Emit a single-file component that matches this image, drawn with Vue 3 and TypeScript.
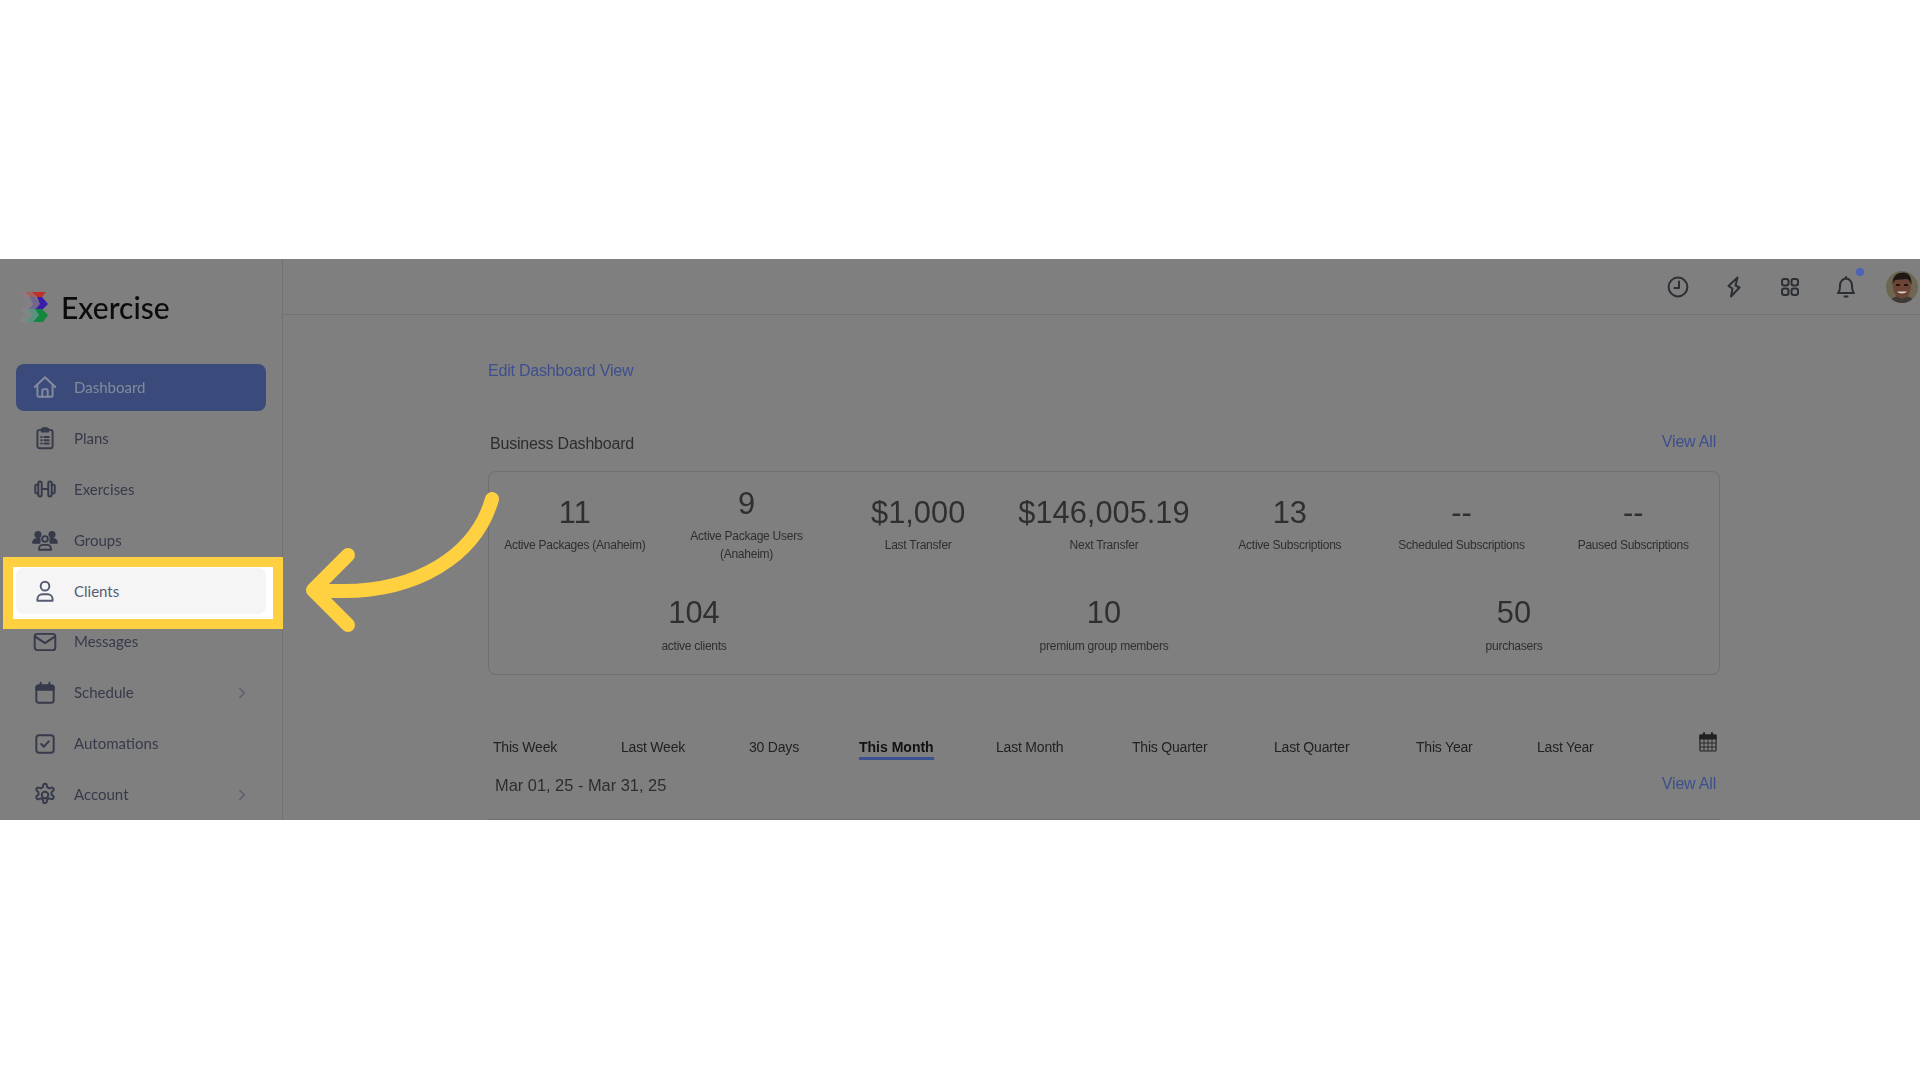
<script setup lang="ts">
interface NavItem { label: string; icon: string; chevron?: boolean; active?: boolean; current?: boolean }
const nav: NavItem[] = [
  { label: 'Dashboard', icon: 'home', active: true },
  { label: 'Plans', icon: 'plans' },
  { label: 'Exercises', icon: 'dumbbell' },
  { label: 'Groups', icon: 'groups' },
  { label: 'Clients', icon: 'user', current: true },
  { label: 'Messages', icon: 'mail' },
  { label: 'Schedule', icon: 'calendar', chevron: true },
  { label: 'Automations', icon: 'check' },
  { label: 'Account', icon: 'gear', chevron: true },
]
const statsTop = [
  { v: '11', l: 'Active Packages (Anaheim)' },
  { v: '9', l: 'Active Package Users (Anaheim)', tall: true },
  { v: '$1,000', l: 'Last Transfer' },
  { v: '$146,005.19', l: 'Next Transfer' },
  { v: '13', l: 'Active Subscriptions' },
  { v: '--', l: 'Scheduled Subscriptions' },
  { v: '--', l: 'Paused Subscriptions' },
]
const statsBottom = [
  { v: '104', l: 'active clients' },
  { v: '10', l: 'premium group members' },
  { v: '50', l: 'purchasers' },
]
const tabs = ['This Week', 'Last Week', '30 Days', 'This Month', 'Last Month', 'This Quarter', 'Last Quarter', 'This Year', 'Last Year']
</script>

<template>
  <div class="page">
    <div class="stage">
      <aside class="sidebar">
        <div class="brand">
          <svg class="logo" viewBox="0 0 30 30" width="30" height="30">
            <g transform="translate(-14 0)" opacity=".75">
              <path d="M14 0 H28 L24 5 H19 Z" fill="#8d7d80" />
              <path d="M19 5 H24 L30 12 L24 18 H17 L22 12 Z" fill="#84808e" />
              <path d="M17 17 H24 L30 23 L25 30 H15 L21 23 Z" fill="#7f8a88" />
            </g>
            <g transform="translate(-7 0)">
              <path d="M14 0 H28 L24 5 H19 Z" fill="#a4625f" />
              <path d="M19 5 H24 L30 12 L24 18 H17 L22 12 Z" fill="#72668f" />
              <path d="M17 17 H24 L30 23 L25 30 H15 L21 23 Z" fill="#5d917f" />
            </g>
            <path d="M14 0 H28 L24 5 H19 Z" fill="#c2302a" />
            <path d="M19 5 H24 L30 12 L24 18 H17 L22 12 Z" fill="#3a1ca6" />
            <path d="M17 17 H24 L30 23 L25 30 H15 L21 23 Z" fill="#11883d" />
          </svg>
          <span class="brand-name">Exercise</span>
        </div>
        <nav class="nav">
          <div v-for="item in nav" :key="item.label" class="nav-item" :class="{ active: item.active, current: item.current }">
            <svg class="nav-icon" viewBox="0 0 24 24" width="26" height="26" fill="none" stroke="currentColor" stroke-width="1.8" stroke-linecap="round" stroke-linejoin="round">
              <template v-if="item.icon === 'home'">
                <path d="M2.5 12 L12 3 L21.5 12" />
                <path d="M5 10 V20 a1 1 0 0 0 1 1 H18 a1 1 0 0 0 1 -1 V10" />
                <path d="M9.5 21 V15 a1 1 0 0 1 1 -1 h3 a1 1 0 0 1 1 1 V21" />
              </template>
              <template v-else-if="item.icon === 'plans'">
                <rect x="5" y="4.5" width="14" height="17" rx="2" />
                <path d="M9 4.5 a1.5 1.5 0 0 1 1.5 -1.5 h3 a1.5 1.5 0 0 1 1.5 1.5 v1.5 h-6 Z" />
                <path d="M8.5 11 h.5 M11.5 11 h4 M8.5 14 h.5 M11.5 14 h4 M8.5 17 h.5 M11.5 17 h4" />
              </template>
              <template v-else-if="item.icon === 'dumbbell'">
                <path d="M9 12 H15" />
                <rect x="5.8" y="5" width="3.2" height="14" rx="1.6" />
                <rect x="15" y="5" width="3.2" height="14" rx="1.6" />
                <path d="M5.8 8 H4.2 a1.2 1.2 0 0 0 -1.2 1.2 V14.8 a1.2 1.2 0 0 0 1.2 1.2 H5.8" />
                <path d="M18.2 8 H19.8 a1.2 1.2 0 0 1 1.2 1.2 V14.8 a1.2 1.2 0 0 1 -1.2 1.2 H18.2" />
              </template>
              <template v-else-if="item.icon === 'groups'">
                <circle cx="12" cy="11" r="2.6" />
                <path d="M6.5 21 v-1 a3.5 3.5 0 0 1 3.5 -3.5 h4 a3.5 3.5 0 0 1 3.5 3.5 v1 Z" />
                <circle cx="5.5" cy="7" r="2.4" fill="currentColor" />
                <circle cx="18.5" cy="7" r="2.4" fill="currentColor" />
                <path d="M1 14.5 a4 4 0 0 1 4 -3.5 h2 v3.5 Z M23 14.5 a4 4 0 0 0 -4 -3.5 h-2 v3.5 Z" fill="currentColor" />
              </template>
              <template v-else-if="item.icon === 'user'">
                <circle cx="12" cy="7.5" r="4" />
                <path d="M5 21 v-1.5 a4.5 4.5 0 0 1 4.5 -4.5 h5 a4.5 4.5 0 0 1 4.5 4.5 V21 Z" />
              </template>
              <template v-else-if="item.icon === 'mail'">
                <rect x="2.5" y="4.5" width="19" height="15" rx="2.5" />
                <path d="M3 7 L12 13 L21 7" />
              </template>
              <template v-else-if="item.icon === 'calendar'">
                <rect x="4" y="5" width="16" height="16" rx="2" />
                <path d="M4 9 H20 V7 a2 2 0 0 0 -2 -2 H6 a2 2 0 0 0 -2 2 Z" fill="currentColor" />
                <path d="M8 2.5 V5 M16 2.5 V5" />
              </template>
              <template v-else-if="item.icon === 'check'">
                <rect x="4" y="4" width="16" height="16" rx="2.5" />
                <path d="M8.5 12 L11 14.5 L15.5 9.5" />
              </template>
              <template v-else>
                <circle cx="12" cy="12" r="3" />
                <path d="M10.3 3.3 a1.7 1.7 0 0 1 3.4 0 l.3 1.5 a7.5 7.5 0 0 1 1.9 1.1 l1.5 -.5 a1.7 1.7 0 0 1 1.7 3 l-1.1 1 a7.5 7.5 0 0 1 0 2.2 l1.1 1 a1.7 1.7 0 0 1 -1.7 3 l-1.5 -.5 a7.5 7.5 0 0 1 -1.9 1.1 l-.3 1.5 a1.7 1.7 0 0 1 -3.4 0 l-.3 -1.5 a7.5 7.5 0 0 1 -1.9 -1.1 l-1.5 .5 a1.7 1.7 0 0 1 -1.7 -3 l1.1 -1 a7.5 7.5 0 0 1 0 -2.2 l-1.1 -1 a1.7 1.7 0 0 1 1.7 -3 l1.5 .5 a7.5 7.5 0 0 1 1.9 -1.1 Z" />
              </template>
            </svg>
            <span class="nav-label">{{ item.label }}</span>
            <svg v-if="item.chevron" class="chevron" viewBox="0 0 10 16" width="8" height="12" fill="none" stroke="currentColor" stroke-width="1.8" stroke-linecap="round" stroke-linejoin="round">
              <path d="M2 2 L8 8 L2 14" />
            </svg>
          </div>
        </nav>
      </aside>

      <main class="main">
        <header class="topbar">
          <svg class="top-icon" viewBox="0 0 24 24" width="24" height="24" fill="none" stroke="currentColor" stroke-width="2" stroke-linecap="round" stroke-linejoin="round">
            <circle cx="12" cy="12" r="9.4" />
            <path d="M13 6.5 V13 H8.5" />
          </svg>
          <svg class="top-icon" viewBox="0 0 24 24" width="24" height="24" fill="none" stroke="currentColor" stroke-width="2" stroke-linecap="round" stroke-linejoin="round">
            <path d="M15.5 2.5 L6.5 11 L10.5 13.5 L9 21.5 L17.5 12.5 L13.5 10.5 Z" />
          </svg>
          <svg class="top-icon" viewBox="0 0 24 24" width="24" height="24" fill="none" stroke="currentColor" stroke-width="2" stroke-linejoin="round">
            <rect x="4" y="4" width="6.5" height="6.5" rx="2.2" />
            <rect x="13.5" y="4" width="6.5" height="6.5" rx="2.2" />
            <rect x="4" y="13.5" width="6.5" height="6.5" rx="2.2" />
            <rect x="13.5" y="13.5" width="6.5" height="6.5" rx="2.2" />
          </svg>
          <div class="bell">
            <svg class="top-icon" viewBox="0 0 24 24" width="24" height="24" fill="none" stroke="currentColor" stroke-width="2" stroke-linecap="round" stroke-linejoin="round">
              <path d="M4 18 H20 C18.5 16.5 18 15 18 10.5 A6 7 0 0 0 6 10.5 C6 15 5.5 16.5 4 18 Z" />
              <path d="M12 2 V3.5" />
              <path d="M10.5 21.5 H13.5" />
            </svg>
            <span class="dot"></span>
          </div>
          <svg class="avatar" viewBox="0 0 32 32" width="32" height="32">
            <defs><clipPath id="avatar-clip"><circle cx="16" cy="16" r="16" /></clipPath></defs>
            <g clip-path="url(#avatar-clip)">
              <rect width="32" height="32" fill="#6d6650" />
              <path d="M4 32 C5 26 10 25 16 25 C22 25 27 26 28 32 Z" fill="#3d3a38" />
              <ellipse cx="16" cy="15.5" rx="9" ry="12" fill="#6b4436" />
              <path d="M6.5 14 C6 4 12 1.5 17 1.5 C23 1.5 26 6 25.5 14 C24 10 23 8.5 20 8 C15 9 10 8 8 10 Z" fill="#1d1715" />
              <path d="M10 14 h4 M18 14 h4" stroke="#1d1715" stroke-width="2" />
              <path d="M11 20.5 C13 23 19 23 21 20.5 Z" fill="#d9d2c9" />
            </g>
          </svg>
        </header>

        <div class="content">
          <a class="edit-link">Edit Dashboard View</a>
          <div class="section-head">
            <h2 class="section-title">Business Dashboard</h2>
            <a class="view-all">View All</a>
          </div>
          <section class="card">
            <div class="row-top">
              <div v-for="s in statsTop" :key="s.l" class="stat" :class="{ tall: s.tall }">
                <div class="stat-value">{{ s.v }}</div>
                <div class="stat-label">{{ s.l }}</div>
              </div>
            </div>
            <div class="row-bottom">
              <div v-for="s in statsBottom" :key="s.l" class="stat">
                <div class="stat-value">{{ s.v }}</div>
                <div class="stat-label wide-gap">{{ s.l }}</div>
              </div>
            </div>
          </section>
          <div class="tabs">
            <span v-for="t in tabs" :key="t" class="tab" :class="{ selected: t === 'This Month' }">{{ t }}</span>
            <svg class="tab-cal" viewBox="0 0 18 20" width="18" height="20" fill="none" stroke="currentColor" stroke-width="1.2">
              <rect x="1" y="3" width="16" height="16" rx="1" />
              <path d="M1 3 H17 V7 H1 Z" fill="currentColor" />
              <path d="M1 11 H17 M1 15 H17 M5 7 V19 M9 7 V19 M13 7 V19" stroke-width=".9" />
              <path d="M5 1 V4 M13 1 V4" stroke-width="2" stroke-linecap="round" />
            </svg>
          </div>
          <div class="range-head">
            <span class="range">Mar 01, 25 - Mar 31, 25</span>
            <a class="view-all">View All</a>
          </div>
          <div class="next-card"></div>
        </div>
      </main>

      <!-- Tutorial annotation lying over the screenshot -->
      <div class="callout">
        <div class="callout-row">
          <svg class="nav-icon" viewBox="0 0 24 24" width="26" height="26" fill="none" stroke="currentColor" stroke-width="1.8" stroke-linecap="round" stroke-linejoin="round">
            <circle cx="12" cy="7.5" r="4" />
            <path d="M5 21 v-1.5 a4.5 4.5 0 0 1 4.5 -4.5 h5 a4.5 4.5 0 0 1 4.5 4.5 V21 Z" />
          </svg>
          <span class="nav-label">Clients</span>
        </div>
      </div>
      <svg class="arrow" viewBox="0 0 220 160" width="220" height="160" fill="none" stroke="#ffd040" stroke-width="14" stroke-linecap="round" stroke-linejoin="round">
        <path d="M202 19 C186 76 126 112 50 111 L25 111" />
        <path d="M58 75 L23 110 L58 145" />
      </svg>
    </div>
  </div>
</template>

<style scoped>
.page {
  width: 1920px;
  height: 1080px;
  background: #fff;
  padding-top: 259px;
  box-sizing: border-box;
  overflow: hidden;
  font-family: "Liberation Sans", Arial, sans-serif;
}
.stage {
  position: relative;
  display: flex;
  width: 1920px;
  height: 561px;
  background: #7f7f7f;
  overflow: hidden;
}
.sidebar {
  width: 283px;
  flex: none;
  box-sizing: border-box;
  border-right: 1px solid #737373;
  display: flex;
  flex-direction: column;
  filter: blur(.5px);
}
.brand {
  display: flex;
  align-items: center;
  gap: 13px;
  height: 105px;
  padding: 0 0 9px 18px;
  box-sizing: border-box;
}
.logo { flex: none; }
.brand-name {
  font-family: Lato, "Noto Sans", sans-serif;
  font-size: 30px;
  font-weight: 500;
  color: #0b0b0d;
}
.nav {
  display: flex;
  flex-direction: column;
  gap: 4px;
  padding: 0 16px;
}
.nav-item {
  display: flex;
  align-items: center;
  height: 46.9px;
  padding: 0 20px 0 16px;
  border-radius: 8px;
  color: #363a4a;
}
.nav-item.active {
  background: #3a4a7a;
  color: #858b9e;
}
.nav-item.current { visibility: hidden; }
.nav-icon { flex: none; }
.nav-label {
  margin-left: 16px;
  padding-bottom: 1px;
  font-family: Lato, "Noto Sans", sans-serif;
  font-size: 15px;
}
.chevron { margin-left: auto; color: #5b5e68; }

.main {
  flex: 1;
  min-width: 0;
  display: flex;
  flex-direction: column;
  filter: blur(.5px);
}
.topbar {
  height: 56px;
  flex: none;
  box-sizing: border-box;
  border-bottom: 1px solid #737373;
  display: flex;
  align-items: center;
  justify-content: flex-end;
  gap: 32px;
  padding: 1px 2px 0 0;
  color: #2b2e33;
}
.top-icon { display: block; flex: none; }
.bell { position: relative; }
.dot {
  position: absolute;
  top: -7px;
  right: -6px;
  width: 8px;
  height: 8px;
  border-radius: 50%;
  background: #4a62b8;
}
.avatar { flex: none; margin-left: -4px; }

.content {
  width: 1232px;
  margin-left: 205px;
  display: flex;
  flex-direction: column;
  flex: 1;
  min-height: 0;
}
.edit-link {
  margin-top: 46px;
  height: 20px;
  line-height: 20px;
  font-size: 16px;
  letter-spacing: -.2px;
  color: #3c4f8f;
}
.section-head {
  margin-top: 51px;
  height: 24px;
  display: flex;
  align-items: center;
  justify-content: space-between;
  padding: 0 4px 0 2px;
}
.section-title { margin: 0; font-size: 16px; letter-spacing: -.2px; font-weight: 400; color: #2d2d2d; }
.view-all { font-size: 16px; letter-spacing: -.2px; color: #3c4f8f; margin-top: -4px; }
.card {
  box-sizing: border-box;
  margin-top: 15px;
  height: 204px;
  flex: none;
  border: 1px solid #6f6f6f;
  border-radius: 8px;
}
.row-top {
  display: grid;
  grid-template-columns: repeat(3, 1fr) 200px repeat(3, 1fr);
  height: 123px;
  padding-top: 23px;
  box-sizing: border-box;
}
.row-bottom {
  display: grid;
  grid-template-columns: repeat(3, 1fr);
}
.stat { text-align: center; color: #333; padding: 0 12px; }
.stat.tall { margin-top: -9px; }
.stat-value { font-size: 30.8px; line-height: 36px; color: #2f2f2f; }
.stat-label { margin-top: 4.5px; font-size: 12px; letter-spacing: -.25px; line-height: 18px; color: #2f2f2f; }
.stat-label.wide-gap { margin-top: 6px; }
.tabs {
  position: relative;
  flex: none;
  display: grid;
  grid-template-columns: 128px 128px 110px 137px 136px 142px 142px 121px 1fr;
  margin-top: 60.5px;
  padding-left: 5px;
  height: 22px;
  align-items: center;
}
.tab { font-size: 14px; letter-spacing: -.2px; color: #222; justify-self: start; position: relative; }
.tab.selected { font-weight: 700; letter-spacing: 0; color: #111; }
.tab.selected::after {
  content: "";
  position: absolute;
  left: 0;
  right: 0;
  bottom: -5px;
  height: 3px;
  background: #3c4f8f;
}
.tab-cal { position: absolute; right: 3px; top: -3.5px; color: #222; }
.range-head {
  margin-top: 16px;
  height: 24px;
  flex: none;
  display: flex;
  align-items: center;
  justify-content: space-between;
  padding: 0 4px 0 7px;
}
.range { font-size: 16.4px; color: #2d2d2d; }
.next-card {
  margin-top: 21px;
  flex: 1;
  border: 1px solid #6f6f6f;
  border-bottom: 0;
  background: #767676;
}

.callout {
  position: absolute;
  left: 3px;
  top: 298px;
  width: 280px;
  height: 72px;
  box-sizing: border-box;
  border: 10px solid #ffd040;
  background: #fff;
  padding: 1px 7px 5px 3px;
  display: flex;
}
.callout-row {
  flex: 1;
  display: flex;
  align-items: center;
  padding-left: 16px;
  background: #f5f5f5;
  border-radius: 8px;
  color: #555c72;
}
.arrow { position: absolute; left: 290px; top: 221px; }
</style>

<style>
html, body { margin: 0; background: #fff; }
</style>
